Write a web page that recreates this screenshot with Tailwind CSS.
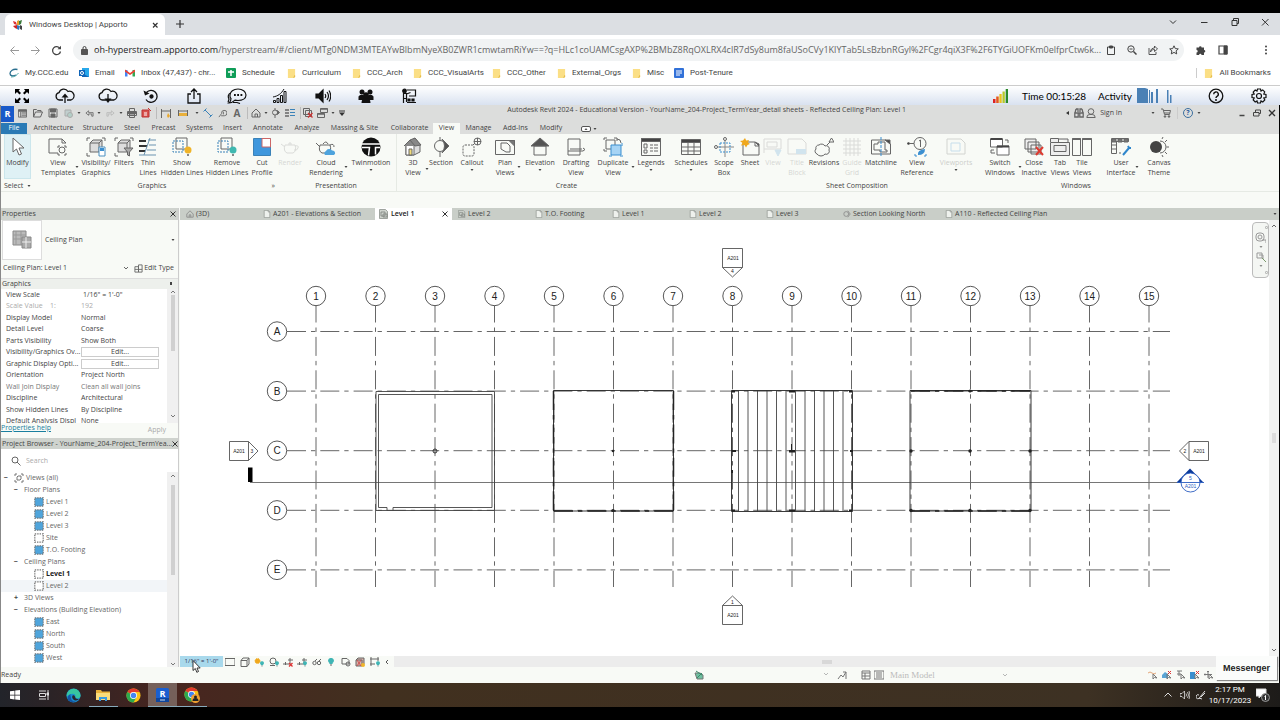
<!DOCTYPE html>
<html lang="en">
  <head>
    <meta charset="UTF-8" />
    <meta name="viewport" content="width=device-width, initial-scale=1.0" />
    <title>Windows Desktop | Apporto</title>
    <script src="https://cdn.jsdelivr.net/npm/@tailwindcss/browser@4"></script>
  </head>
  <body class="bg-black text-[#444] font-['Open_Sans','Noto_Sans',sans-serif] text-[7px] leading-[10px] overflow-hidden">
    <!-- Shared icons -->
    <svg class="hidden">
      <symbol id="folder" viewBox="0 0 10 10"><path d="M1 0h8v8l-1 2H1z" fill="#fbdf86"/><path d="M8 7h1v1L8 10H7z" fill="#e5bd4c"/></symbol>
      <symbol id="sheet" viewBox="0 0 10 10"><path d="M1.500.5h5l2 2v7h-7z" fill="#eef1ed" stroke="#8b908b" stroke-width=".8"/><path d="M6.500.5v2h2" fill="none" stroke="#8b908b" stroke-width=".8"/></symbol>
      <symbol id="plan" viewBox="0 0 10 10"><path d="M.5 9.500v-9h6l2 2v7z" fill="#ced3cd" stroke="#8b908b" stroke-width=".8"/><path d="M2 3h4v4H2zM4 5h4v3H4z" fill="none" stroke="#7c817c" stroke-width=".8"/></symbol>
      <symbol id="view-on" viewBox="0 0 10 10"><rect x=".8" y=".8" width="8.400" height="8.400" fill="#4fa5dc" stroke="#777" stroke-width="1.200" stroke-dasharray="1.400 1"/></symbol>
      <symbol id="view-off" viewBox="0 0 10 10"><rect x=".8" y=".8" width="8.400" height="8.400" fill="#fff" stroke="#777" stroke-width="1.300" stroke-dasharray="1.400 1"/></symbol>
      <symbol id="caret" viewBox="0 0 4 4"><path d="M.5 1h3L2 3z" fill="#444" stroke="none"/></symbol>
      <symbol id="bulb" viewBox="0 0 6 8"><path d="M3 0a2.700 2.700 0 0 1 1.600 5v1H1.400V5A2.700 2.700 0 0 1 3 0z" fill="#3fb5b5" stroke="none"/><path d="M2 7h2" stroke="#666"/></symbol>
      <symbol id="chrome" viewBox="0 0 16 16">
        <circle cx="8" cy="8" r="7.500" fill="#fbc116"/>
        <path d="M8 8 1.500 4.200A7.500 7.500 0 0 1 14.500 4.300H8z" fill="#e33b2e"/>
        <path d="M1.500 4.200A7.500 7.500 0 0 0 8 15.500L11 10 8 8z" fill="#2da94f"/>
        <circle cx="8" cy="8" r="3.700" fill="#fff"/><circle cx="8" cy="8" r="2.900" fill="#4285f4"/>
      </symbol>
    </svg>

    <div class="h-screen flex flex-col py-[13px]">
      <!-- Browser tabs -->
      <div class="h-[22px] shrink-0 bg-[#dcdfe3] flex items-stretch pl-[5px] font-[Roboto,sans-serif] text-[8px]">
        <div class="w-40 bg-white rounded-t-md mt-px pl-2 pr-1.5 flex items-center">
          <svg class="size-[10px]" viewBox="0 0 10 10"><path d="M0 1l3 1 1 3-3-1z" fill="#d33"/><path d="M4 1l2-1v5H4z" fill="#e9a02c"/><path d="M6 1l3-1-1 4-2 1z" fill="#3a7a3a"/><path d="M0 6l4-1v4l-2-1z" fill="#c22"/><path d="M4 5l3 1-1 4-2-1z" fill="#37b"/><path d="M7 5l2 1v4L7 9z" fill="#444"/></svg>
          <span class="ml-1.5 flex-1 whitespace-nowrap">Windows Desktop | Apporto</span>
          <button aria-label="Close tab"><svg class="size-2 stroke-[#333]" viewBox="0 0 8 8"><path d="M2 2l4.500 4.500M6.500 2L2 6.500" stroke-width="1.200"/></svg></button>
        </div>
        <button class="ml-2.5" aria-label="New tab"><svg class="size-[10px] stroke-[#333]" viewBox="0 0 10 10"><path d="M5 1v8M1 5h8" stroke-width="1.200"/></svg></button>
        <div class="ml-auto flex items-center pb-1 stroke-[#333] fill-none">
          <button class="w-[31px] flex justify-center" aria-label="Search tabs"><svg class="size-2" viewBox="0 0 8 8"><path d="M1 2.500l3 3 3-3"/></svg></button>
          <button class="w-[31px] flex justify-center" aria-label="Minimize"><svg class="size-2" viewBox="0 0 8 8"><path d="M1 4.500h6.500"/></svg></button>
          <button class="w-[31px] flex justify-center" aria-label="Restore"><svg class="size-2" viewBox="0 0 8 8"><path d="M1 2.500h5v5H1zM2.500 2V.5h5v5H6"/></svg></button>
          <button class="w-[30px] flex justify-center" aria-label="Close"><svg class="size-2" viewBox="0 0 8 8"><path d="M1 1l6.500 6.500M7.500 1L1 7.500"/></svg></button>
        </div>
      </div>

      <!-- Address bar -->
      <div class="h-[30px] shrink-0 bg-white flex items-center pl-[9px] pr-[9px] stroke-[#444] fill-none">
        <button class="w-[21px]" aria-label="Back"><svg class="size-[11px] stroke-[#999]" viewBox="0 0 11 11"><path d="M10 5.500H2M5.500 1.500l-4 4 4 4"/></svg></button>
        <button class="w-[21px]" aria-label="Forward"><svg class="size-[11px] stroke-[#999]" viewBox="0 0 11 11"><path d="M1 5.500h8M5.500 1.500l4 4-4 4"/></svg></button>
        <button class="w-[22px]" aria-label="Reload"><svg class="size-[11px]" viewBox="0 0 11 11"><path d="M9 3.500A4 4 0 1 0 9.500 6.500" stroke-width="1.300"/><path d="M10 .8v3.500H6.500z" fill="#444" stroke="none"/></svg></button>
        <div class="flex-1 min-w-0 h-[22px] rounded-full bg-[#f1f3f4] flex items-center pl-2">
          <svg class="w-[7px] h-[9px] shrink-0" viewBox="0 0 7 9"><path d="M.5 3.500h6v5h-6z" fill="#555" stroke="#555"/><path d="M2 3.500V2a1.500 1.500 0 0 1 3 0v1.500"/></svg>
          <p class="ml-1.5 flex-1 min-w-0 whitespace-nowrap text-[9px] leading-[14px] text-[#666]"><span class="text-[#222]">oh-hyperstream.apporto.com</span>/hyperstream/#/client/MTg0NDM3MTEAYwBlbmNyeXB0ZWR1cmwtamRiYw==?q=HLc1coUAMCsgAXP%2BMbZ8RqOXLRX4clR7dSy8um8faUSoCVy1KlYTab5LsBzbnRGyl%2FCgr4qiX3F%2F6TYGiUOFKm0elfprCtw6k...</p>
          <div class="grid grid-cols-4 w-[84px] shrink-0 justify-items-center">
            <button aria-label="Clipboard"><svg class="size-[10px]" viewBox="0 0 10 10"><path d="M1.500 2h7v7.500h-7z"/><path d="M3.500 1h3v2h-3z" fill="#444"/></svg></button>
            <button aria-label="Zoom"><svg class="size-[10px]" viewBox="0 0 10 10"><circle cx="4" cy="4" r="3.200"/><path d="M6.500 6.500L9.500 9.500" stroke-width="1.500"/><path d="M2.500 4h3"/></svg></button>
            <button aria-label="Share"><svg class="size-[10px]" viewBox="0 0 10 10"><path d="M1 3v6.500h7V7M2.500 7c0-3 2-4 4-4V1l3 3-3 2.500v-2c-2 0-3 .5-4 2.500z" stroke-width=".9"/></svg></button>
            <button aria-label="Bookmark"><svg class="size-[10px]" viewBox="0 0 10 10"><path d="M5 .8l1.300 2.800 3 .3-2.200 2 .6 3L5 7.400 2.300 8.900l.6-3-2.200-2 3-.3z"/></svg></button>
          </div>
        </div>
        <button class="ml-3" aria-label="Extensions"><svg class="size-[10px]" viewBox="0 0 10 10"><path d="M.5 2.500H3a1.300 1.300 0 1 1 2.600 0H8V5a1.300 1.300 0 1 1 0 2.600V10H5.500a1.200 1.200 0 1 0-2.400 0H.5V7.500a1.200 1.200 0 1 0 0-2.400z" fill="#444" stroke="none"/></svg></button>
        <button class="ml-3" aria-label="Side panel"><svg class="size-[10px]" viewBox="0 0 10 10"><path d="M1 1h8v8H1z" stroke-width="1.200"/><path d="M6 1h3v8H6z" fill="#444"/></svg></button>
        <button class="ml-[33px]" aria-label="Menu"><svg class="size-[10px] fill-[#444] stroke-none" viewBox="0 0 10 10"><circle cx="5" cy="1.500" r="1"/><circle cx="5" cy="5" r="1"/><circle cx="5" cy="8.500" r="1"/></svg></button>
      </div>

      <!-- Bookmarks -->
      <nav class="h-5 shrink-0 bg-white flex items-center pb-1 pl-[9px] pr-[9px] text-[8px] font-[Roboto,sans-serif] whitespace-nowrap [&>a]:flex [&>a]:items-center [&>a]:gap-[6px]">
        <a href="#" class="w-[70px]"><svg class="size-[10px]" viewBox="0 0 10 10"><path d="M8.500 1.500C4 .5 1 3 1 5.500s3 3 6 1.500" fill="none" stroke="#2a6f8f" stroke-width="1.300"/><path d="M2 9c4 0 6-2 7.500-4" fill="none" stroke="#5aa"/></svg>My.CCC.edu</a>
        <a href="#" class="w-[46px]"><svg class="size-[10px]" viewBox="0 0 10 10"><path d="M3 0h7v9H3z" fill="#28a8ea"/><path d="M3 5l7 4H3z" fill="#1466b8"/><path d="M0 2h6v6H0z" fill="#0f64b8"/><circle cx="3" cy="5" r="1.500" fill="none" stroke="#fff"/></svg>Email</a>
        <a href="#" class="w-[101px]"><svg class="size-[10px]" viewBox="0 0 10 10"><path d="M0 2h2.500v6.500H0z" fill="#4285f4"/><path d="M7.500 2H10v6.500H7.500z" fill="#34a853"/><path d="M0 1.500L5 5l5-3.500v2.200L5 7 0 3.700z" fill="#ea4335"/></svg>Inbox (47,437) - chr...</a>
        <a href="#" class="w-[61px]"><svg class="size-[10px]" viewBox="0 0 10 10"><rect width="10" height="10" rx="1" fill="#0f9d58"/><path d="M2 4h6M5 2v6" stroke="#fff" stroke-width="1.500"/></svg>Schedule</a>
        <a href="#" class="w-[65px]"><svg class="size-[9px]"><use href="#folder"/></svg>Curriculum</a>
        <a href="#" class="w-[61px]"><svg class="size-[9px]"><use href="#folder"/></svg>CCC_Arch</a>
        <a href="#" class="w-[79px]"><svg class="size-[9px]"><use href="#folder"/></svg>CCC_VisualArts</a>
        <a href="#" class="w-[65px]"><svg class="size-[9px]"><use href="#folder"/></svg>CCC_Other</a>
        <a href="#" class="w-[75px]"><svg class="size-[9px]"><use href="#folder"/></svg>External_Orgs</a>
        <a href="#" class="w-[42px]"><svg class="size-[9px]"><use href="#folder"/></svg>Misc</a>
        <a href="#"><svg class="size-[10px]" viewBox="0 0 10 10"><rect width="10" height="10" rx="1" fill="#3271d8"/><path d="M2 3h6M2 5h6M2 7h4" stroke="#fff"/></svg>Post-Tenure</a>
        <a href="#" class="ml-auto border-l border-[#ccc] pl-[7px]"><svg class="size-[9px]"><use href="#folder"/></svg>All Bookmarks</a>
      </nav>

      <!-- Remote session toolbar -->
      <div class="h-5 shrink-0 border-t border-[#ccc] bg-linear-to-b from-white to-[#d9e2f0] flex items-center text-[10px] font-[Lato,sans-serif] text-black [&>button]:flex [&>button]:justify-center">
        <button class="w-[43px]" aria-label="Full screen"><svg class="size-4" viewBox="0 0 16 16"><path d="M1 1h5L4.700 2.700 7 5 5.500 6.500 3 4 1 6zM15 1h-5l1.300 1.700L9 5l1.500 1.500L13 4l2 2zM1 15h5l-1.300-1.700L7 11 5.500 9.500 3 12l-2-2zM15 15h-5l1.300-1.700L9 11l1.500-1.500L13 12l2-2z"/></svg></button>
        <button class="w-[43px]" aria-label="Upload"><svg class="w-5 h-4" viewBox="0 0 20 16" fill="none" stroke="#111" stroke-width="1.300"><path d="M8 12H4.500a3.700 3.700 0 0 1-.5-7.300A5 5 0 0 1 13 3.500 4.300 4.300 0 0 1 16 12h-4"/><path d="M10 15V7"/><path d="M6.500 9.500L10 5.500l3.500 4z" fill="#111" stroke="none"/></svg></button>
        <button class="w-[43px]" aria-label="Download"><svg class="w-5 h-4" viewBox="0 0 20 16" fill="none" stroke="#111" stroke-width="1.300"><path d="M8 12H4.500a3.700 3.700 0 0 1-.5-7.300A5 5 0 0 1 13 3.500 4.300 4.300 0 0 1 16 12h-4"/><path d="M10 6v7"/><path d="M6.500 10.500L10 15l3.500-4.500z" fill="#111" stroke="none"/></svg></button>
        <button class="w-[43px]" aria-label="Refresh"><svg class="size-4" viewBox="0 0 16 16" fill="none" stroke="#111" stroke-width="1.300"><path d="M3.500 4.500a6 6 0 1 1-.5 7"/><path d="M.5 2.500L2 7.500l4.500-2z" fill="#111" stroke="none"/><circle cx="8.500" cy="8.500" r="1.500" fill="#111"/></svg></button>
        <button class="w-[43px]" aria-label="Share"><svg class="size-4" viewBox="0 0 16 16" fill="none" stroke="#111" stroke-width="1.300"><path d="M5 6H2v9h12V6h-3M8 11V1.500M5 4l3-3 3 3"/></svg></button>
        <button class="w-[43px]" aria-label="Chat"><svg class="w-5 h-4" viewBox="0 0 20 16" fill="none" stroke="#111" stroke-width="1.200"><path d="M11 1C15.500 1 19 3.500 19 7s-3.500 5.500-8 5.500c-1 0-2-.1-3-.4C6 14 4 15 2 15c1.500-1 2-2.500 2-4.500C2.500 9.500 3 8.300 3 7c0-3.500 3.500-6 8-6z"/><path d="M3.500 5C1 6 .8 9 2 11L1 14.500M6 14.500h4l3 1"/><path d="M7 7h1.800M10.200 7H12M13.500 7h1.800" stroke-width="2"/></svg></button>
        <button class="w-[43px]" aria-label="Statistics"><svg class="size-4" viewBox="0 0 16 16" fill="none" stroke="#111"><path d="M1.500 12.500h2v2h-2zM5 10.500h2v4H5zM8.500 7.500h2v7h-2zM12 3.500h2v11h-2zM1 9c5-1 8-3 11-8"/></svg></button>
        <button class="w-[43px]" aria-label="Sound"><svg class="size-4" viewBox="0 0 16 16" fill="none" stroke="#111" stroke-width="1.200"><path d="M1 6h3l4-4v12l-4-4H1z" fill="#111"/><path d="M10 6q1.500 2 0 4M12 4q3 4 0 8M14 2.500q3.500 5.500 0 11"/></svg></button>
        <button class="w-[43px]" aria-label="People"><svg class="size-4" viewBox="0 0 16 16" fill="#111"><circle cx="4" cy="4" r="2.500"/><circle cx="12" cy="4" r="2.500"/><path d="M.5 8.500Q2 6 5 7l3 1 3-1q3-1 4.500 1.500V12H.5z"/><circle cx="8" cy="7" r="2.800"/><path d="M3.500 15q0-5 4.500-5t4.500 5z"/></svg></button>
        <button class="w-[43px]" aria-label="Classroom"><svg class="size-4" viewBox="0 0 16 16" fill="none" stroke="#111" stroke-width="1.200"><circle cx="3.500" cy="3" r="1.800" fill="#111"/><path d="M2.500 5.500h3v5h-3zM6 2h8.500v6H8M5.500 6l4-1.500M2.500 11v4M5.500 11v3" /><path d="M6 14.500h9M7 11h2v2H7zM11 11h2v2h-2z" fill="#111"/></svg></button>
        <div class="flex-1"></div>
        <svg class="w-[15px] h-[14px]" viewBox="0 0 15 14"><path d="M0 10h2.500v4H0z" fill="#d22"/><path d="M3.200 7.500h2.500V14H3.200z" fill="#e55a1c"/><path d="M6.400 5h2.300v9H6.400z" fill="#e8c21c"/><path d="M9.500 2.500h2.300V14H9.500z" fill="#b5c92a"/><path d="M12.700 0H15v14h-2.300z" fill="#2a8a2a"/></svg>
        <span class="ml-[14px] w-[76px] whitespace-nowrap">Time 00:15:28</span>
        <span class="w-[39px]">Activity</span>
        <svg class="w-[35px] h-[15px] shrink-0" viewBox="0 0 35 15" fill="#4a80b5"><path d="M0 0h8l3 1v14H0zM12 2h1v13h-1zM14 4h2v11h-2zM19 1h2v14h-2zM30 2h1.500v13H30zM33 7h1.500v8H33z"/></svg>
        <button class="ml-[22px] w-[43px]" aria-label="Help"><svg class="size-4" viewBox="0 0 16 16"><circle cx="8" cy="8" r="6.800" fill="none" stroke="#111" stroke-width="1.300"/><path d="M5.700 6.300a2.300 2.300 0 1 1 3.300 2q-1 .5-1 1.700" fill="none" stroke="#111" stroke-width="1.400"/><circle cx="8" cy="12" r=".9"/></svg></button>
        <button class="w-[43px]" aria-label="Settings"><svg class="size-4" viewBox="0 0 16 16" fill="none" stroke="#111" stroke-width="1.200"><path d="M6.500 1h3l.5 2 1.700-1.100 2 2L12.800 6l2.200.5v3l-2.200.5 1 2-2 2-1.800-1-.5 2h-3L6 13l-1.800 1-2-2 1-2L1 9.500v-3L3.200 6l-1-2 2-2L6 3z"/><circle cx="8" cy="8" r="2.500"/></svg></button>
      </div>

      <!-- Revit window -->
      <div class="flex-1 min-h-0 flex flex-col bg-[#f8faf6] border-l border-[#888] border-r border-r-black relative">
        <!-- Quick access + title -->
        <header class="h-[18px] shrink-0 bg-[#dcdddc] flex items-center fill-none stroke-[#666] pb-[2px] [&_button]:flex [&_button]:justify-center [&_button]:items-center [&_button]:h-4 [&_button]:shrink-0">
          <button class="w-[13px] mr-px mt-px bg-[#1859c9] text-white font-bold text-[9px]">R</button>
          <button class="w-[14px]" aria-label="Home"><svg class="size-[9px] shrink-0" viewBox="0 0 10 10"><path d="M.5 1h9v8h-9zM4 3.500h5M4 5.500h5M4 7.500h5M3 3v6"/><path d="M.5 1h9v1.500h-9z" fill="#666"/></svg></button>
          <button class="w-[18px]" aria-label="Open"><svg class="size-[10px]" viewBox="0 0 10 10"><path d="M.5 9V1.500h3l1 1H8V4M.5 9l2-5h7L7.500 9z"/></svg></button>
          <button class="w-3" aria-label="Save"><svg class="size-[10px]" viewBox="0 0 10 10"><path d="M1 1h8v8H1z"/><path d="M2.500 1h5v3h-5zM3 6h4v3H3z" fill="#666"/></svg></button>
          <button class="w-[18px] opacity-40" aria-label="Sync"><svg class="size-[10px]" viewBox="0 0 10 10"><path d="M2 2h6v6H2z" fill="#9bb" /><circle cx="7" cy="7" r="2.500" fill="#7ba"/></svg></button>
          <svg class="w-1 h-1 shrink-0"><use href="#caret"/></svg>
          <button class="w-4" aria-label="Undo"><svg class="size-[9px]" viewBox="0 0 10 10"><path d="M4 2L1 4.500 4 7V5.500h3.500V8H9V4H4z" stroke-width=".9"/></svg></button>
          <svg class="w-1 h-1 shrink-0"><use href="#caret"/></svg>
          <button class="w-[18px] opacity-30" aria-label="Redo"><svg class="size-[9px]" viewBox="0 0 10 10"><path d="M6 2l3 2.500L6 7V5.500H2.500V8H1V4h5z" stroke-width=".9"/></svg></button>
          <svg class="w-1 h-1 shrink-0"><use href="#caret"/></svg>
          <button class="w-[18px]" aria-label="Print"><svg class="size-[10px]" viewBox="0 0 10 10"><path d="M2.500 3V.5h5V3M.5 3.500h9v4h-9zM2.500 6h5v3.500h-5z"/><path d="M1 4h8v1.500H1z" fill="#666"/></svg></button>
          <button class="w-[10px]" aria-label="Close hidden"><svg class="size-[10px] shrink-0" viewBox="0 0 10 10"><path d="M1 2h7v7H1z" fill="#d9534f" stroke="#b33"/><path d="M3 5h3M3 7h3" stroke="#fff"/><path d="M7 0l3 3" stroke="#c33"/></svg></button>
          <i class="w-px h-3 ml-[5px] mr-1 bg-[#bbb]"></i>
          <button class="w-[10px]" aria-label="Measure"><svg class="size-[11px] shrink-0" viewBox="0 0 11 11"><path d="M.5 10V1M9.500 10V1M.5 3h9"/><path d="M7 5l2 3-2 2-1-2z" fill="#e9a82c" stroke="none"/></svg></button>
          <button class="w-6" aria-label="Dimension"><svg class="size-[10px]" viewBox="0 0 10 10"><path d="M0 5h10v3H0z" fill="#e9b03c" stroke="none"/><path d="M.5 2v6M9.500 2v6M.5 3h9"/></svg></button>
          <svg class="w-1 h-1 shrink-0"><use href="#caret"/></svg>
          <button class="w-[18px]" aria-label="Aligned"><svg class="size-[10px]" viewBox="0 0 10 10"><path d="M2 2l6 6M.5 3.500l3-3M6.500 9.500l3-3" stroke="#3b82b8"/></svg></button>
          <button class="w-[10px]" aria-label="Tag"><svg class="size-[9px] shrink-0" viewBox="0 0 10 10"><path d="M1 9l3-4M4 5a3 3 0 1 1 3 2.500H3.500"/><path d="M6 3v3"/></svg></button>
          <button class="w-5 text-[10px] font-bold text-[#666]">A</button>
          <i class="w-px h-3 bg-[#bbb]"></i>
          <button class="w-[16px]" aria-label="3D"><svg class="size-[10px]" viewBox="0 0 10 10"><path d="M1 5l4-4 4 4v4H1z"/><path d="M4 9V6h2.500v3M1 5l4-4 4 4"/></svg></button>
          <svg class="w-1 h-1 shrink-0"><use href="#caret"/></svg>
          <button class="w-[14px]" aria-label="Section"><svg class="size-[10px]" viewBox="0 0 10 10"><circle cx="5" cy="4.500" r="2.500"/><path d="M5 0v2M5 7v3M7.500 2.500L9.500 4.500l-2 2z" fill="#666"/></svg></button>
          <button class="w-4" aria-label="Thin lines"><svg class="size-[10px]" viewBox="0 0 10 10"><path d="M0 2h4M0 5h4M0 8h4" stroke-width="1.600"/><path d="M5 1.500h5M5 4.500h5M5 7.500h5" stroke="#3b82b8"/></svg></button>
          <i class="w-px h-3 mx-[2px] bg-[#bbb]"></i>
          <button class="w-[10px]" aria-label="Close views"><svg class="size-[10px] shrink-0" viewBox="0 0 10 10"><path d="M.5.5h6v6h-6zM2.500 2.500h6v6h-6z"/><path d="M5 5l4.500 4.500M9.500 5L5 9.500" stroke="#c33" stroke-width="1.300"/></svg></button>
          <button class="w-[18px]" aria-label="Switch"><svg class="size-[11px]" viewBox="0 0 11 11"><path d="M3.500.5h7v4h-7zM.5 5.500h7v4h-7z"/><path d="M3.500 1h7M.5 6h7" stroke-width="1.500"/></svg></button>
          <svg class="w-1 h-1 shrink-0"><use href="#caret"/></svg>
          <button class="w-[14px]" aria-label="Customize"><svg class="size-[6px]" viewBox="0 0 6 6"><path d="M0 1h6" stroke="#333"/><path d="M0 2.500h6L3 6z" fill="#333" stroke="none"/></svg></button>
          <h1 class="flex-1 text-center whitespace-nowrap text-[#444] self-start">Autodesk Revit 2024 - Educational Version - YourName_204-Project_TermYear_detail sheets - Reflected Ceiling Plan: Level 1</h1>
          <button class="w-[8px]" aria-label="Expand"><svg class="size-1" viewBox="0 0 4 4"><path d="M3 0v4L0 2z" fill="#333" stroke="none"/></svg></button>
          <button class="w-[14px]" aria-label="Find"><svg class="size-[10px]" viewBox="0 0 10 10"><path d="M2 1h2v3M8 1H6v3M.8 5h3.400v4H.8zM5.800 5h3.400v4H5.800zM1 5l1-4M9 5L8 1M4 5h2" stroke-width="1.300"/></svg></button>
          <button class="gap-1" aria-label="Sign in"><svg class="size-[10px]" viewBox="0 0 10 10"><circle cx="5" cy="3.500" r="2.800"/><path d="M.8 9.500q0-3 3-3h2.400q3 0 3 3z"/></svg>Sign In</button>
          <svg class="w-1 h-1 ml-[29px] mr-1 shrink-0"><use href="#caret"/></svg>
          <button class="w-[14px]" aria-label="Cart"><svg class="size-[10px]" viewBox="0 0 10 10"><path d="M0 1h2l1.500 5.500h5L9.500 2.500H2.500M3 5h6"/><circle cx="4" cy="8.500" r=".8" fill="#666"/><circle cx="8" cy="8.500" r=".8" fill="#666"/></svg></button>
          <i class="w-px h-3 ml-1 mr-[5px] bg-[#ccc]"></i>
          <button class="w-[10px]"><span class="size-[10px] shrink-0 rounded-full border border-[#3b6f9f] text-[#2a5f9f] font-bold leading-[8px]">?</span></button>
          <svg class="w-1 h-1 ml-1 mr-[34px] shrink-0"><use href="#caret"/></svg>
          <button class="w-[14px]" aria-label="Minimize"><svg class="w-2 h-2" viewBox="0 0 8 8"><path d="M1.500 6.500h5" stroke="#444" stroke-width="1.500"/></svg></button>
          <button class="w-4" aria-label="Restore"><svg class="size-2" viewBox="0 0 8 8"><path d="M2.500 3V1h5v3.500H6M.5 3.500H6v3.500H.5z" stroke="#444"/></svg></button>
          <button class="w-[14px]" aria-label="Close"><svg class="size-2" viewBox="0 0 8 8"><path d="M1 1l6 6M7 1L1 7" stroke="#333" stroke-width="1.300"/></svg></button>
        </header>

        <!-- Ribbon tabs -->
        <nav class="h-[11px] shrink-0 bg-[#dcdddc] flex items-stretch whitespace-nowrap leading-[10px] text-center">
          <a href="#" class="w-[26px] bg-[#2a7ab5] text-white">File</a>
          <a href="#" class="w-[53px]">Architecture</a>
          <a href="#" class="w-[36px]">Structure</a>
          <a href="#" class="w-8">Steel</a>
          <a href="#" class="w-[31px]">Precast</a>
          <a href="#" class="w-[41px]">Systems</a>
          <a href="#" class="w-[25px]">Insert</a>
          <a href="#" class="w-[46px]">Annotate</a>
          <a href="#" class="w-8">Analyze</a>
          <a href="#" class="w-[63px]">Massing &amp; Site</a>
          <a href="#" class="w-[47px]">Collaborate</a>
          <a href="#" class="w-[27px] bg-[#f8faf6]">View</a>
          <a href="#" class="w-[37px]">Manage</a>
          <a href="#" class="w-[37px]">Add-Ins</a>
          <a href="#" class="w-[34px]">Modify</a>
          <button class="ml-[13px] flex items-center gap-[2px]" aria-label="Ribbon display"><svg class="w-[10px] h-[6px]" viewBox="0 0 10 6"><rect x=".5" y=".5" width="9" height="5" rx="1.500" fill="#fff" stroke="#555"/><path d="M3.500 4h3L5 2z" fill="#555"/></svg><svg class="size-1"><use href="#caret"/></svg></button>
        </nav>

        <!-- Ribbon -->
        <div class="h-[58px] shrink-0 border-b border-[#e6eae4] flex fill-none stroke-[#666] whitespace-nowrap [&_button]:relative [&_button]:flex [&_button]:flex-col [&_button]:items-center [&_button]:h-[45px] [&_button]:pt-[3px] [&_button]:leading-[10px] [&_button]:shrink-0 [&_button>svg:first-child]:mb-px [&_button>svg]:shrink-0">
          <section class="w-[31px] flex flex-col">
            <div class="flex"><button class="w-[27px] ml-[3px] bg-[#dff1f5] outline outline-[#cbe6ec] -outline-offset-1">
              <svg class="size-5" viewBox="0 0 20 20"><path d="M5 1v14l3.500-3 2.500 6 2.500-1-2.500-6h5z" fill="#fff"/></svg>Modify</button></div>
            <h2 class="mt-[2px] pl-[3px] flex items-center gap-1">Select <svg class="size-1"><use href="#caret"/></svg></h2>
          </section>
          <section class="w-[240px] flex flex-col">
            <div class="flex pl-1.5">
              <button class="w-10"><svg class="size-5" viewBox="0 0 20 20"><path d="M1 16V2h13l4 4M1 16h9M14 2v4h4"/><circle cx="14" cy="13" r="3"/><path d="M10 11V9h2M18 11V9h-2M10 16v2h2M18 16v2h-2"/></svg>View<br />Templates<svg class="size-1 absolute -right-px top-[31px]"><use href="#caret"/></svg></button>
              <button class="w-9"><svg class="size-5" viewBox="0 0 20 20"><path d="M1 4V1h3M16 1h3v3M1 16v3h3" /><path d="M4 6l3-3h9v9l-3 3H4zM4 6h9v9M13 6l3-3" fill="#ddd"/><path d="M13 10h6v9h-6z" fill="#fff" stroke="#4a90c0"/><path d="M14 11h4v3h-4z" fill="#3b8fd0" stroke="none"/></svg>Visibility/<br />Graphics</button>
              <button class="w-5"><svg class="size-5" viewBox="0 0 20 20"><path d="M1 4V1h3M16 1h3v3M1 16v3h3"/><path d="M4 6l3-3h9v9l-3 3H4zM4 6h9v9M13 6l3-3" fill="#ddd"/><path d="M10 11h9l-3.500 4v4l-2 -1v-3z" fill="#aaa"/></svg>Filters</button>
              <button class="w-7"><svg class="size-5" viewBox="0 0 20 20"><path d="M1 4h7M1 9h8M1 14h6" stroke="#333" stroke-width="2"/><path d="M10 3h8M11 8h7M9 13h9M1 18h17M12 1L6 18" stroke="#6a93b0"/></svg>Thin<br />Lines</button>
              <button class="w-10"><svg class="size-5" viewBox="0 0 20 20"><path d="M4 1h11v11H4z"/><path d="M1 4h10v11H1z" stroke="#3b82b8" stroke-dasharray="2 1"/><circle cx="16" cy="13" r="3.500" fill="#f0b429" stroke="none"/><path d="M15 17h2v2h-2z" fill="#888" stroke="none"/></svg>Show<br />Hidden Lines</button>
              <button class="w-[50px]"><svg class="size-5" viewBox="0 0 20 20"><path d="M4 1h11v11H4z"/><path d="M1 4h10v11H1z" stroke="#3b82b8" stroke-dasharray="2 1"/><circle cx="16" cy="13" r="3.500" fill="#3fb8b0" stroke="none"/><path d="M15 17h2v2h-2z" fill="#888" stroke="none"/></svg>Remove<br />Hidden Lines</button>
              <button class="w-5"><svg class="size-5" viewBox="0 0 20 20"><path d="M1.500 1.500h17v17h-17z" fill="#3f97dd" stroke="#3b82b8"/><path d="M10 1.500h8.500V10H10z" fill="#fff" stroke="#c66"/></svg>Cut<br />Profile</button>
            </div>
            <h2 class="mt-[2px] text-center relative">Graphics<span class="absolute right-[-3px]">»</span></h2>
          </section>
          <section class="w-[124px] flex flex-col pl-1">
            <div class="flex">
              <button class="w-7 opacity-20" disabled><svg class="size-5" viewBox="0 0 20 20"><path d="M5 8h10q2 6-2 8H7Q3 14 5 8zM5 10L1 7M15 9q4-1 3 2t-4 2M8 7h4M10 5v2"/></svg>Render</button>
              <button class="w-11"><svg class="size-5" viewBox="0 0 20 20"><path d="M4 8h10q2 6-2 8H6Q2 14 4 8zM4 10L0 6M14 8q4-2 4 2M7 7q3-4 5 0"/><path d="M9 18a2.500 2.500 0 0 1 1-4 3.500 3.500 0 0 1 6-.5A2.500 2.500 0 0 1 18 18z" fill="#4ea3dd" stroke="none"/></svg>Cloud<br />Rendering<svg class="size-1 absolute right-0 top-[31px]"><use href="#caret"/></svg></button>
              <button class="w-[46px]"><svg class="size-5" viewBox="0 0 20 20"><circle cx="10" cy="10" r="9.500" fill="#111" stroke="none"/><path d="M1 7h18M1 10.500h7.500l-1 8M19 10.500h-4.500v7" stroke="#fff" stroke-width="1.500"/></svg>Twinmotion<svg class="size-1"><use href="#caret"/></svg></button>
            </div>
            <h2 class="mt-[2px] text-center">Presentation</h2>
          </section>
          <section class="w-[340px] flex flex-col border-l border-[#e6eae4]">
            <div class="flex">
              <button class="w-8"><svg class="size-5" viewBox="0 0 20 20"><path d="M3 9v9h8l6-3V8l-5-7z" fill="#ddd"/><path d="M3 9v9h8V9L7 5z" fill="#fff"/><path d="M1 9l6-6 5 6M7 3l5-2 6 7-6 1" fill="#888"/><path d="M6 12h3v6H6z" fill="#f3dd7a"/></svg>3D<br />View<svg class="size-1 absolute right-0 top-[33px]"><use href="#caret"/></svg></button>
              <button class="w-6"><svg class="size-5" viewBox="0 0 20 20"><circle cx="9" cy="9" r="5.500"/><path d="M9 0v3M9 15v5"/><path d="M11 2l7 7-7 7q5-7 0-14z" fill="#555"/></svg>Section</button>
              <button class="w-[38px]"><svg class="size-5" viewBox="0 0 20 20"><rect x="1" y="8" width="11" height="11" rx="2" stroke-dasharray="2 1"/><circle cx="15.500" cy="4.500" r="3.500"/><path d="M12 4.500h7M15.500 1v7M11 8l2-2"/></svg>Callout<svg class="size-1"><use href="#caret"/></svg></button>
              <button class="w-7"><svg class="size-5" viewBox="0 0 20 20"><path d="M.5 3.500h19v14H.5zM6 6h6l3 3v6h-4L6 12z"/><path d="M14 3.500h5.500V9z" fill="#777"/></svg>Plan<br />Views<svg class="size-1 absolute -right-0.5 top-[31px]"><use href="#caret"/></svg></button>
              <button class="w-[42px]"><svg class="size-5" viewBox="0 0 20 20"><path d="M4 9h12v9H4z"/><path d="M1 9l9-8 9 8z" fill="#555"/></svg>Elevation<svg class="size-1"><use href="#caret"/></svg></button>
              <button class="w-[30px]"><svg class="size-5" viewBox="0 0 20 20"><path d="M2 2h12v16H2zM4 12h12M2 14h15l2-1.500L17 11"/></svg>Drafting<br />View</button>
              <button class="w-11"><svg class="size-5" viewBox="0 0 20 20"><path d="M3 3h9v9H3z"/><path d="M1 3V1h3M11 1h3v3M1 12v2h3M14 2q4 0 4 4"/><path d="M8 8h10v10H8z" fill="#a6d4f5" stroke="#3b8fd0"/><path d="M6 19h3M17 19h3M19 6v3" stroke="#3b8fd0"/></svg>Duplicate<br />View<svg class="size-1 absolute right-0 top-[31px]"><use href="#caret"/></svg></button>
              <button class="w-8"><svg class="size-5" viewBox="0 0 20 20"><path d="M.5 1.500h19v17H.500z"/><path d="M.5 1.500h19v3H.5z" fill="#444"/><path d="M3 7h3v4H3zM3 13h3v3H3zM9 8h3M13 8h4M9 11h3M13 11h4M9 14h3M13 14h4"/></svg>Legends<svg class="size-1"><use href="#caret"/></svg></button>
              <button class="w-12"><svg class="size-5" viewBox="0 0 20 20"><path d="M.5 3.500h19v14H.5zM7 6v12M13 6v12M.5 10h19M.5 14h19"/><path d="M.5 2.500h19v3H.5z" fill="#444"/></svg>Schedules<svg class="size-1"><use href="#caret"/></svg></button>
              <button class="w-[18px]"><svg class="size-5" viewBox="0 0 20 20"><circle cx="11" cy="2" r="1.500"/><circle cx="2" cy="10" r="1.500"/><path d="M3.500 10H20M11 4v16" stroke="#888"/><path d="M6 6h10v9H6z" stroke="#3b8fd0" stroke-dasharray="2 1"/></svg>Scope<br />Box</button>
            </div>
            <h2 class="mt-[2px] text-center">Create</h2>
          </section>
          <section class="w-[242px] flex flex-col">
            <div class="flex">
              <button class="w-7"><svg class="size-5" viewBox="0 0 20 20"><path d="M3 6v12h16V9l-4-4H8M15 5v4h4"/><path d="M15 5l4 4v-2z" fill="#444"/><path d="M5 1l1.200 2.500L9 3 8 5.500 10 7 7.500 8 6 10.500 4.500 8 1 8.500 2.500 6 0 4l3-.5z" fill="#f0a81c" stroke="none"/></svg>Sheet</button>
              <button class="w-[18px] opacity-20" disabled><svg class="size-5" viewBox="0 0 20 20"><path d="M1 2h17v10H1zM4 5h10v5H4zM1 16V12"/><path d="M12 13h6l-3 6z" fill="#3b8fd0" stroke="#3b8fd0"/></svg>View</button>
              <button class="w-[30px] opacity-20" disabled><svg class="size-5" viewBox="0 0 20 20"><path d="M1 2h14l4 4v11H1z"/><path d="M9 12h10v5H9z" fill="#3b8fd0" stroke="none"/></svg>Title<br />Block</button>
              <button class="w-6"><svg class="size-5" viewBox="0 0 20 20"><path d="M3 17a3 3 0 0 1-1-5 3 3 0 0 1 3-4 4 4 0 0 1 6 1 3 3 0 0 1 4 4 3 3 0 0 1-4 4 5 5 0 0 1-8 0zM13 8l3-3M15 5h5l-2.500-4z"/></svg>Revisions</button>
              <button class="w-8 opacity-20" disabled><svg class="size-5" viewBox="0 0 20 20"><path d="M1 4h18M1 8h18M1 12h18M1 16h18M4 1v18M8 1v18M12 1v18M16 1v18"/></svg>Guide<br />Grid</button>
              <button class="w-[26px]"><svg class="size-5" viewBox="0 0 20 20"><path d="M.5 3h14l5 4v10H.5zM3 7h4V5h7v8h2v2H9v-2H3z"/><path d="M14 3l5 4v-4z" fill="#444"/><path d="M10 0v20" stroke="#3b8fd0" stroke-dasharray="3 1"/></svg>Matchline</button>
              <button class="w-[46px]"><svg class="size-5" viewBox="0 0 20 20"><circle cx="13" cy="6.500" r="6"/><path d="M0 6.500h7M12 4l1.500-1v7"/><circle cx="1.500" cy="6.500" r="1" fill="#444"/><path d="M11 18q-1-5 7-6 0 6-7 6z" fill="#3b8fd0" stroke="none"/><path d="M8 17v2h2M19 17v2h-2" stroke="#3b8fd0"/></svg>View<br />Reference</button>
              <button class="w-8"><span class="flex flex-col items-center opacity-25"><svg class="size-5 mb-px" viewBox="0 0 20 20"><path d="M1 2h14l4 4v11H1z"/><path d="M5 6h9v8H5z" stroke="#3b8fd0"/></svg>Viewports</span><svg class="size-1"><use href="#caret"/></svg></button>
            </div>
            <h2 class="mt-[2px] text-center">Sheet Composition</h2>
          </section>
          <section class="w-[196px] flex flex-col">
            <div class="flex">
              <button class="w-11"><svg class="size-5" viewBox="0 0 20 20"><path d="M.5 2h12v8H.5zM7 9h12v9H7z" fill="#fff"/><path d="M.5 2h12M7 9.500h12" stroke="#444" stroke-width="2"/><path d="M15 3h3v3M4 13H1v3h4"/></svg>Switch<br />Windows<svg class="size-1 absolute right-0 top-[31px]"><use href="#caret"/></svg></button>
              <button class="w-6"><svg class="size-5" viewBox="0 0 20 20"><path d="M1 2h11v10H1zM4 5h11v10H4zM7 8h10v9H7z" fill="#eee"/><path d="M12 10l7 8M19 10l-7 8" stroke="#dd3a30" stroke-width="2"/></svg>Close<br />Inactive</button>
              <button class="w-7"><svg class="size-5" viewBox="0 0 20 20"><path d="M.5 5V1.500h8V5M8.500 2H18v3M.5 5.500h19v13H.5zM4 8.500h12v6H4z" fill="#eee"/></svg>Tab<br />Views</button>
              <button class="w-4"><svg class="size-5" viewBox="0 0 20 20"><path d="M.5 1.500h8v17h-8zM10.500 1.500h9v17h-9z"/><path d="M.5 2h8M10.500 2h9" stroke-width="2"/></svg>Tile<br />Views</button>
              <button class="w-[62px]"><svg class="size-5" viewBox="0 0 20 20"><path d="M.5 1.500h17v3H.5zM.5 4.500h5v12h-5zM.5 8h5M.5 12h5M8 16h2"/><path d="M1 2h4v3H1zM7 2h4v3H7zM13 2h4v3h-4z" fill="#777"/><path d="M12 18l6-7M17 9l1 2 2 0" stroke="#2f86cc" stroke-width="2"/></svg>User<br />Interface<svg class="size-1 absolute right-[13px] top-[31px]"><use href="#caret"/></svg></button>
              <button class="w-[14px]"><svg class="size-5" viewBox="0 0 20 20"><path d="M11 4a6 6 0 0 1 0 12" /><path d="M13 2l1-2M16 5l2-2M17.500 10H20M16 15l2 2M13 18l1 2"/><circle cx="7" cy="10" r="6" fill="#444" stroke="none"/></svg>Canvas<br />Theme</button>
            </div>
            <h2 class="mt-[2px] text-center">Windows</h2>
          </section>
        </div>

        <div class="h-4 shrink-0"></div>

        <!-- Panels and canvas -->
        <div class="flex-1 min-h-0 flex">
          <aside class="w-[178px] shrink-0 flex flex-col border-r border-[#ccc] mr-px">
            <!-- Properties -->
            <div class="h-3 shrink-0 bg-[#cfd3ce] flex items-center justify-between pl-px pr-[2px]"><span>Properties</span><button aria-label="Close properties"><svg class="size-[6px] stroke-[#333]" viewBox="0 0 6 6"><path d="M.5.5l5 5M5.500.5l-5 5"/></svg></button></div>
            <div class="h-10 shrink-0 flex items-center">
              <div class="w-10 h-10 ml-px border border-[#ddd] bg-white flex items-center justify-center"><svg class="size-5" viewBox="0 0 20 20"><path d="M1 1h13v14H1z" fill="#bbb" stroke="#888"/><path d="M4 1v14M1 5h13M1 9h13M9 1v14" stroke="#999"/><path d="M10 7h9v11h-9z" fill="#aaa" stroke="#888"/><path d="M10 12h9M14 7v11" stroke="#eee"/></svg></div>
              <span class="ml-[3px] flex-1">Ceiling Plan</span>
              <svg class="size-1 mr-[3px]"><use href="#caret"/></svg>
            </div>
            <div class="h-[15px] shrink-0 flex items-end pl-[2px] pr-1">
              <select aria-label="Type" class="appearance-none w-[120px] h-[14px] outline-none"><option>Ceiling Plan: Level 1</option></select>
              <svg class="size-[6px] mb-1 fill-none stroke-[#666]" viewBox="0 0 6 6"><path d="M1 2l2 2 2-2"/></svg>
              <button class="ml-auto flex items-center gap-px h-[14px]"><svg class="size-[9px] fill-none stroke-[#666]" viewBox="0 0 10 10"><path d="M1 3h4v6H1zM5 1h4v8H5zM1 6h8"/></svg>Edit Type</button>
            </div>
            <div class="h-[11px] shrink-0 mt-[3px] flex items-center border-t border-[#ddd] bg-[#edf0ec] pl-px"><span class="flex-1">Graphics</span><svg class="w-1 h-1 mr-[5px]"><path d="M1 0h2v3H1z" fill="#444"/></svg></div>
            <div class="flex h-[138px] shrink-0 overflow-hidden">
              <div class="flex-1 bg-white">
              <table class="w-full h-[138px] table-fixed leading-[10px] whitespace-nowrap [&_td]:p-0 [&_td:first-child]:pl-[5px]">
                <colgroup><col class="w-[80px]" /><col /></colgroup>
                <tbody>
                  <tr><td>View Scale</td><td class="pl-[2px]!">1/16" = 1'-0"</td></tr>
                  <tr class="text-[#aaa]"><td>Scale Value&nbsp;&nbsp;&nbsp; 1:</td><td>192</td></tr>
                  <tr><td>Display Model</td><td>Normal</td></tr>
                  <tr><td>Detail Level</td><td>Coarse</td></tr>
                  <tr><td>Parts Visibility</td><td>Show Both</td></tr>
                  <tr><td>Visibility/Graphics Ov...</td><td><button class="block w-[78px] h-[10px] leading-[8px] border border-[#ccc]">Edit...</button></td></tr>
                  <tr><td>Graphic Display Opti...</td><td><button class="block w-[78px] h-[10px] leading-[8px] border border-[#ccc]">Edit...</button></td></tr>
                  <tr><td>Orientation</td><td>Project North</td></tr>
                  <tr class="text-[#777]"><td>Wall Join Display</td><td>Clean all wall joins</td></tr>
                  <tr><td>Discipline</td><td>Architectural</td></tr>
                  <tr><td>Show Hidden Lines</td><td>By Discipline</td></tr>
                  <tr><td>Default Analysis Displ</td><td>None</td></tr>
                </tbody>
              </table>
              </div>
              <div class="w-[11px] bg-[#f0f0f0] flex flex-col items-center fill-none stroke-[#777]">
                <svg class="size-[6px]" viewBox="0 0 6 6"><path d="M1 4l2-2 2 2"/></svg>
                <i class="w-1 h-14 bg-[#d0d0d0]"></i>
                <svg class="size-[6px] mt-auto mb-2" viewBox="0 0 6 6"><path d="M1 2l2 2 2-2"/></svg>
              </div>
            </div>
            <div class="h-[15px] shrink-0 -mt-1 relative bg-[#f8faf6] flex items-start justify-between pr-3"><a href="#" class="text-[#1a7f9f] underline leading-[9px]">Properties help</a><button class="text-[#aaa] pt-[2px]" disabled>Apply</button></div>

            <!-- Project browser -->
            <div class="h-[11px] shrink-0 bg-[#cfd3ce] flex items-center justify-between pl-px pr-[2px] whitespace-nowrap"><span>Project Browser - YourName_204-Project_TermYea...</span><button aria-label="Close browser"><svg class="size-[6px] stroke-[#333]" viewBox="0 0 6 6"><path d="M.5.5l5 5M5.500.5l-5 5"/></svg></button></div>
            <label class="h-[23px] shrink-0 flex items-center pl-[10px] gap-[5px] bg-white"><svg class="size-[10px] fill-none stroke-[#666]" viewBox="0 0 10 10"><circle cx="4" cy="4" r="3"/><path d="M6 6l3.500 3.500"/></svg><input type="search" aria-label="Search" placeholder="Search" class="w-24 outline-none placeholder:text-[#aaa]" /></label>
            <div class="flex-1 min-h-0 flex bg-white text-[#666]">
              <ul class="flex-1 [&>li]:h-3 [&>li]:flex [&>li]:items-center [&>li]:gap-[2px] [&_svg]:size-[10px] [&_b]:w-2 [&_b]:text-[#444]">
                <li class="pl-[3px]"><b>−</b><svg viewBox="0 0 10 10" fill="none" stroke="#777"><path d="M1 3V1h2M9 3V1H7M1 7v2h2M9 7v2H7M3 4l1-1h3v3l-1 1H3z"/></svg>Views (all)</li>
                <li class="pl-[13px]"><b>−</b>Floor Plans</li>
                <li class="pl-[33px]"><svg><use href="#view-on"/></svg>Level 1</li>
                <li class="pl-[33px]"><svg><use href="#view-on"/></svg>Level 2</li>
                <li class="pl-[33px]"><svg><use href="#view-on"/></svg>Level 3</li>
                <li class="pl-[33px]"><svg><use href="#view-off"/></svg>Site</li>
                <li class="pl-[33px]"><svg><use href="#view-on"/></svg>T.O. Footing</li>
                <li class="pl-[13px]"><b>−</b>Ceiling Plans</li>
                <li class="pl-[33px] font-bold text-[#222]"><svg><use href="#view-off"/></svg>Level 1</li>
                <li class="pl-[33px] bg-[#f2f5f8]"><svg><use href="#view-off"/></svg>Level 2</li>
                <li class="pl-[13px]"><b>+</b>3D Views</li>
                <li class="pl-[13px]"><b>−</b>Elevations (Building Elevation)</li>
                <li class="pl-[33px]"><svg><use href="#view-on"/></svg>East</li>
                <li class="pl-[33px]"><svg><use href="#view-on"/></svg>North</li>
                <li class="pl-[33px]"><svg><use href="#view-on"/></svg>South</li>
                <li class="pl-[33px]"><svg><use href="#view-on"/></svg>West</li>
              </ul>
              <div class="w-[11px] bg-[#f0f0f0] flex flex-col items-center fill-none stroke-[#777]">
                <svg class="size-[6px] my-px" viewBox="0 0 6 6"><path d="M1 4l2-2 2 2"/></svg>
                <i class="w-1 h-[90px] mt-[5px] bg-[#d0d0d0]"></i>
                <svg class="size-[6px] mt-auto" viewBox="0 0 6 6"><path d="M1 2l2 2 2-2"/></svg>
              </div>
            </div>
          </aside>

          <main class="flex-1 min-w-0 flex flex-col">
            <!-- View tabs -->
            <div class="h-3 shrink-0 bg-[#c9cec8] flex whitespace-nowrap [&>a]:flex [&>a]:items-center [&>a]:gap-[2px] [&>a]:pl-[6px] [&>a>svg]:size-[8px]">
              <a href="#" class="w-[77px]"><svg viewBox="0 0 10 10" fill="none" stroke="#888"><path d="M1 5l4-4 4 4v4H1zM4 9V6h2v3"/></svg>(3D)</a>
              <a href="#" class="w-[118px]"><svg><use href="#sheet"/></svg>A201 - Elevations &amp; Section</a>
              <div class="w-[77px] bg-white flex items-center gap-[2px] pl-1 pr-1 font-semibold text-[#222]"><svg class="size-[10px]"><use href="#plan"/></svg><span class="flex-1">Level 1</span><button aria-label="Close view"><svg class="size-[6px] stroke-[#333]" viewBox="0 0 6 6"><path d="M.5.5l5 5M5.500.5l-5 5"/></svg></button></div>
              <a href="#" class="w-[77px]"><svg><use href="#plan"/></svg>Level 2</a>
              <a href="#" class="w-[77px]"><svg><use href="#sheet"/></svg>T.O. Footing</a>
              <a href="#" class="w-[77px]"><svg><use href="#sheet"/></svg>Level 1</a>
              <a href="#" class="w-[77px]"><svg><use href="#sheet"/></svg>Level 2</a>
              <a href="#" class="w-[77px]"><svg><use href="#sheet"/></svg>Level 3</a>
              <a href="#" class="w-[102px]"><svg viewBox="0 0 10 10" fill="none" stroke="#888"><circle cx="4" cy="5" r="3"/><path d="M6 1l3 4-3 4"/></svg>Section Looking North</a>
              <a href="#"><svg><use href="#sheet"/></svg>A110 - Reflected Ceiling Plan</a>
              <button class="ml-auto mr-[2px]" aria-label="More tabs"><svg class="size-1"><use href="#caret"/></svg></button>
            </div>

            <!-- Drawing area -->
            <div class="flex-1 min-h-0 flex bg-white">
              <div class="flex-1 min-w-0 relative overflow-hidden">
                <svg class="absolute left-0 top-0 w-[1090px] h-[440px] font-['Liberation_Sans',sans-serif]" viewBox="180 220 1090 440" fill="none" stroke="#555" stroke-width=".9">
                  <g id="grid"></g>
                  <path d="M250 482.500h940" stroke="#666"/>
                  <path d="M248 467.500h4.500v14.500h-4.500z" fill="#000" stroke="none"/>
                  <!-- Walled room -->
                  <path d="M376 391.500h118.500v119H376zM387 507.500h-8.500v-113h113.500v113H393M387 507.500v3M393 507.500v3" stroke="#444"/>
                  <circle cx="435" cy="451" r="2" stroke="#222"/>
                  <!-- Beam frames -->
                  <g stroke="#222">
                    <path d="M553.500 390.500h120v120.500h-120z"/>
                    <path d="M553.500 391v120M673.500 391v120M554 511h119" stroke-width="1.500" stroke-dasharray="19 5 4.400 5"/>
                    <path d="M731.500 390.500h121v121h-121z"/>
                    <path d="M910 390.500h121v120.500H910z"/>
                    <path d="M911 391h119M911 511h119" stroke-width="1.500" stroke-dasharray="19 5 4.400 5"/>
                  </g>
                  <g id="joists" stroke="#444"></g>
                  <g fill="#222" stroke="none">
                    <path d="M732 450h4v2h-4zM789 450h6v2.500h-6zM791 444h1v6h-1zM850 450h3v2h-3zM789 390.500h6v2h-6zM789 509.500h6v2h-6zM732 390.500h3v2h-3zM732 509.500h3v2h-3zM849 390.500h3v2h-3zM849 509.500h3v2h-3zM731 470h2v3h-2z"/>
                    <circle cx="613" cy="451" r="1.200"/><circle cx="911" cy="451" r="1.700"/><circle cx="970" cy="451" r="1.700"/><circle cx="1030" cy="451" r="1.700"/><circle cx="911" cy="510.500" r="1.700"/><circle cx="970" cy="510.500" r="1.700"/><circle cx="1030" cy="510.500" r="1.700"/><circle cx="970" cy="391" r="1.500"/><circle cx="613" cy="510.500" r="1.500"/>
                  </g>
                  <!-- Elevation tags -->
                  <path d="M722.500 248.500h20v19h-20zM722.500 267.500l10 9.500 10-9.500M722.500 605.500h20v19h-20zM722.500 605.500l10-9.500 10 9.500M229.500 441.500h19v19h-19zM248.500 441.500l9.500 9.500-9.500 9.500M1189 441.500h19.500v19H1189zM1189 441.500l-9.500 9.500 9.500 9.500"/>
                  <g fill="#222" stroke="none" font-size="5" text-anchor="middle">
                    <text x="733" y="260">A201</text><text x="732.500" y="273">4</text>
                    <text x="733" y="617">A201</text><text x="732.500" y="604">1</text>
                    <text x="239" y="453">A201</text><text x="252" y="453">3</text>
                    <text x="1199" y="453">A201</text><text x="1185" y="453">2</text>
                  </g>
                  <!-- Section head -->
                  <path d="M1176.500 482.500L1190 468.500l13.500 14z" fill="#0b3a9a" stroke="none"/>
                  <circle cx="1190.500" cy="482.500" r="9.500" fill="#fff" stroke="#2a5cc0"/><path d="M1177 482.500h27" stroke="#2a5cc0"/>
                  <g fill="#2a5cc0" stroke="none" font-size="5" text-anchor="middle"><text x="1190.500" y="480">5</text><text x="1190.500" y="488">A201</text></g>
                </svg>
                <div class="absolute right-0 top-[2px] w-[17px] h-[56px] border border-[#bbb] rounded-sm bg-[#f4f6f3] flex flex-col items-center justify-between py-[3px] fill-none stroke-[#999]">
                  <svg class="size-[3px] self-end" viewBox="0 0 4 4"><circle cx="2" cy="2" r="1.500"/></svg>
                  <svg class="size-[11px]" viewBox="0 0 11 11"><rect x="1" y="1" width="8" height="8" rx="3"/><circle cx="5" cy="5" r="2"/><path d="M7 8h4v3"/></svg>
                  <svg class="size-1 opacity-60"><use href="#caret"/></svg>
                  <svg class="size-[10px]" viewBox="0 0 10 10"><path d="M1 1h5v5H1zM3 3h4v4"/><path d="M6 6l4 4" stroke="#7b9b6b"/></svg>
                  <svg class="size-1 opacity-60"><use href="#caret"/></svg>
                  <svg class="size-[3px] self-end" viewBox="0 0 4 4"><circle cx="2" cy="2" r="1.500"/></svg>
                </div>
              </div>
              <div class="w-[10px] bg-[#f1f2f1] flex flex-col items-center justify-between py-[3px] fill-none stroke-[#666]">
                <svg class="size-[6px]" viewBox="0 0 6 6"><path d="M1 4l2-2 2 2"/></svg>
                <i class="w-1 h-[10px] bg-[#ddd]"></i>
                <svg class="size-[6px]" viewBox="0 0 6 6"><path d="M1 2l2 2 2-2"/></svg>
              </div>
            </div>

            <!-- View controls -->
            <div class="h-[11px] shrink-0 flex items-center bg-[#f8faf6]">
              <button class="w-[43px] h-[11px] bg-[#a9d9ec] text-[#335] text-[6px] shrink-0 leading-[11px]">1/16" = 1'-0"</button>
              <div class="w-[159px] shrink-0 grid grid-cols-11 justify-items-center fill-none stroke-[#666] [&_svg]:size-[10px] [&_svg]:block">
                <button aria-label="Detail level"><svg viewBox="0 0 10 10"><path d="M0 1.500h10v7H0z"/></svg></button>
                <button aria-label="Visual style"><svg viewBox="0 0 10 10"><path d="M1 3.500h6v6H1zM1 3.500l2-2.500h6v6L7 9.500M7 3.500L9 1"/></svg></button>
                <button aria-label="Sun path"><svg viewBox="0 0 10 10"><circle cx="3.500" cy="4" r="2.500" fill="#f0a81c" stroke="#f0a81c" stroke-dasharray="1 1"/><use href="#bulb" x="6" y="4" width="4" height="6"/></svg></button>
                <button aria-label="Shadows"><svg viewBox="0 0 10 10"><circle cx="4" cy="4" r="3"/><path d="M1 8.500h5"/><use href="#bulb" x="6" y="4" width="4" height="6"/></svg></button>
                <button aria-label="Crop view"><svg viewBox="0 0 10 10"><path d="M2.500 5v3M0 7h7V1M5 3h5"/><path d="M6 6l3.500 3.500M9.500 6L6 9.500" stroke="#d33" stroke-width="1.300"/></svg></button>
                <button aria-label="Show crop"><svg viewBox="0 0 10 10"><path d="M2.500 5v3M0 7h7V1M5 3h5"/><use href="#bulb" x="6" y="4" width="4" height="6"/></svg></button>
                <button aria-label="Temporary hide"><svg viewBox="0 0 10 10"><circle cx="2.500" cy="6" r="1.700"/><circle cx="7" cy="6" r="1.700"/><path d="M3 4l2-2M7 4l2-2"/></svg></button>
                <button aria-label="Reveal hidden"><svg viewBox="0 0 10 10"><use href="#bulb" x="2" y="1" width="6" height="8"/></svg></button>
                <button aria-label="Temporary view"><svg viewBox="0 0 10 10"><path d="M1 1.500h5l2 2V7H1z"/><circle cx="7" cy="7" r="2"/></svg></button>
                <button aria-label="Analytical model"><svg viewBox="0 0 10 10"><path d="M1 3h6v6H1zM1 3l2-2h6v6" fill="#d9b0a8"/><path d="M2 3l4 6M6 3L2 9" stroke="#c55"/><circle cx="8" cy="8" r="2" fill="#f0b429" stroke="none"/></svg></button>
                <button aria-label="Constraints"><svg viewBox="0 0 10 10"><path d="M1 0v9M0 2h9M8 0v4M0 7h5"/><use href="#bulb" x="6" y="4" width="4" height="6"/></svg></button>
              </div>
              <svg class="size-[6px] ml-[2px] mr-1 shrink-0 fill-none stroke-[#555]" viewBox="0 0 6 6"><path d="M4 1L2 3l2 2"/></svg>
              <div class="flex-1 h-[11px] bg-[#ececec] flex items-center justify-center"><i class="w-[10px] h-1 mr-5 bg-[#d8d8d8]"></i></div>
            </div>
          </main>
        </div>

        <!-- Status bar -->
        <footer class="h-4 shrink-0 flex items-center fill-none stroke-[#777] [&_svg]:size-[10px]">
          <span class="w-[693px]">Ready</span>
          <svg viewBox="0 0 10 10"><path d="M1 3h5l3 2v4H3z" fill="#6fbfa0"/><path d="M2 1l6 4M3 8l5-5" stroke="#3a8a6a"/></svg>
          <svg class="ml-[117px] opacity-50" viewBox="0 0 10 10"><path d="M3 3l2 2 2-2"/></svg>
          <svg class="ml-[6px] mr-[14px]" viewBox="0 0 10 10"><path d="M1 9l3-4 2 2 3-5M6 2h3v7"/></svg>
          <svg viewBox="0 0 10 10"><path d="M1 1h8v8H1zM1 3h8M4 3v6M1 6h8"/></svg>
          <svg class="ml-[3px]" viewBox="0 0 10 10"><path d="M0 1h10v8H0zM2 3h6M2 5h6M2 7h6"/></svg>
          <select aria-label="Design option" disabled class="appearance-none ml-[6px] w-[110px] font-['Liberation_Serif',serif] text-[#bbb] text-[9px] opacity-100"><option>Main Model</option></select>
          <svg class="opacity-50" viewBox="0 0 10 10"><path d="M3 4l2 2 2-2"/></svg>
          <div class="ml-auto mr-[65px] flex gap-[4px]">
            <svg viewBox="0 0 10 10"><path d="M0 3q2-2 4 0t4 0" stroke="#e3a77a"/><path d="M5 4v5l1.500-1.500L9 8z"/></svg>
            <svg viewBox="0 0 10 10"><path d="M0 5l3-3 3 2v4H0z" fill="#5aa5d5" stroke="none"/><path d="M6 1l3 3M9 1L6 4" stroke="#d33"/><path d="M5 4v5l1.500-1.500L9 8z"/></svg>
            <svg viewBox="0 0 10 10"><path d="M1 1h5M3 1v5M1 4h4"/><path d="M5 4v5l1.500-1.500L9 8z"/></svg>
            <svg viewBox="0 0 10 10"><path d="M0 2h5v7H0z" fill="#3b8fd0" stroke="none"/><path d="M6 1l3 3M9 1L6 4" stroke="#d33"/><path d="M5 4v5l1.500-1.500L9 8z"/></svg>
            <svg viewBox="0 0 10 10"><path d="M4 1v7M0 4.500h8M3 2l1-1 1 1M1 3.500L0 4.500l1 1"/><path d="M5 4v5l1.500-1.500L9 8z"/></svg>
          </div>
        </footer>

        <button class="absolute right-[2px] bottom-[3px] w-[61px] h-6 bg-[#fbfcfb] shadow-[1px_1px_1px_#888] font-['Liberation_Sans',sans-serif] font-bold text-[9px] text-[#222]">Messenger</button>
        <!-- Pointer -->
        <svg class="absolute left-[191px] bottom-[10px] w-[9px] h-[13px]" viewBox="0 0 9 13"><path d="M1 .5v10l2.300-2 1.500 3.800 1.700-.8L5 8h3.200z" fill="#fff" stroke="#222" stroke-width=".9"/></svg>
      </div>

      <!-- Taskbar -->
      <div class="h-6 shrink-0 flex items-stretch bg-[linear-gradient(90deg,#22242a,#2b2326_4%,#48251f_13%,#41301f_30%,#3d3123_85%,#1d1b19)]">
        <div class="w-[207px] shrink-0 grid grid-cols-7 [&>button]:flex [&>button]:items-center [&>button]:justify-center">
          <button aria-label="Start"><svg class="size-[10px]" viewBox="0 0 10 10"><path d="M0 1.300L4.500.7v4H0zM5.200.6L10 0v4.700H5.200zM0 5.400h4.500v4L0 8.800zM5.200 5.400H10V10l-4.800-.6z" fill="#fff"/></svg></button>
          <button aria-label="Task view"><svg class="size-[10px]" viewBox="0 0 10 10" fill="none" stroke="#ddd"><path d="M.5 3.500h6v3h-6zM0 1h7M0 9h7M9 0v10"/><path d="M8 3h2v2H8z" fill="#ddd"/></svg></button>
          <button aria-label="Edge"><svg class="size-[15px]" viewBox="0 0 16 16"><circle cx="8" cy="8" r="7.500" fill="#1b8bd0"/><path d="M.8 7A7.400 7.400 0 0 1 15.500 8q0 3-3.500 3-2.500 0-2-1.500Q10.500 6 7 6 3 6 .8 9z" fill="#37c6a0"/><path d="M5 9q0 5 5.500 5.500Q6 16.500 2.500 13 0 9 5 6.500 4.500 8 5 9z" fill="#1257a5"/><path d="M9.500 9q-1-2-2.500-1-1.500 3 2 5 3 1 5-1.500-4 1-4.500-2.500z" fill="#2a262b"/></svg></button>
          <button class="border-b border-[#8ab]" aria-label="File explorer"><svg class="w-[14px] h-3" viewBox="0 0 14 12"><path d="M0 1h5l1 1.500h8V11H0z" fill="#e9b13a"/><path d="M0 4h14v7H0z" fill="#fbdc7a"/><path d="M3 8h8v4H9V10H5v2H3z" fill="#3b9be0"/></svg></button>
          <button aria-label="Chrome"><svg class="size-[15px]"><use href="#chrome"/></svg></button>
          <button class="bg-[#75605a] border-b border-[#8ab]" aria-label="Revit"><svg class="w-[13px] h-[14px]" viewBox="0 0 13 14"><rect width="13" height="14" rx="1.500" fill="#1a5fd0"/><path d="M0 10h13v4H0z" fill="#0e469f"/><text x="6.500" y="9" font-size="9" font-weight="bold" fill="#fff" text-anchor="middle">R</text><path d="M4 12h5" stroke="#cde"/></svg></button>
          <button class="border-b border-[#8ab]" aria-label="Chrome profile"><svg class="size-4" viewBox="0 0 16 16"><use href="#chrome" width="15" height="15"/><circle cx="11.500" cy="11.500" r="4.500" fill="#f0a030"/><circle cx="11.500" cy="10" r="1.500" fill="#222"/><path d="M8.500 14q0-3 3-3t3 3z" fill="#222"/></svg></button>
        </div>
        <div class="ml-auto flex items-center pr-[10px] text-white font-[Roboto,sans-serif] text-[8px] fill-none stroke-[#ddd]">
          <svg class="size-2 mr-2" viewBox="0 0 8 8"><path d="M.5 5.500L4 2l3.500 3.500"/></svg>
          <svg class="size-[10px] mr-[6px]" viewBox="0 0 10 10"><path d="M0 3.500h2L4.500 1v8L2 6.500H0zM6 3.500q1 1.500 0 3M7.500 2q2 3 0 6M9 1q2 4 0 8" stroke-width=".8"/></svg>
          <svg class="size-[10px] mr-[6px]" viewBox="0 0 10 10"><path d="M4 7a2 2 0 1 1-1-2M4 7l5-6M5 7l4-4M3 8l3 1"/></svg>
          <div class="w-[36px] leading-[11px] mr-2 whitespace-nowrap flex flex-col items-center"><span>2:17 PM</span><span>10/17/2023</span></div>
          <svg class="size-[14px]" viewBox="0 0 14 14"><path d="M0 1h10v7H5L3 10V8H0z" fill="#fff"/><circle cx="9.500" cy="9.500" r="4" fill="#333" stroke="#999"/><path d="M8.500 8.500l1-1V12" stroke="#fff"/></svg>
        </div>
      </div>
    </div>

    <script>
      // Structural grid: numbered columns and lettered rows
      const grid = document.getElementById("grid");
      const joists = document.getElementById("joists");
      let out = "";
      function bubble(x, y, label) {
        return `<circle cx="${x}" cy="${y}" r="9.700" stroke="#444"/><text x="${x}" y="${y + 3.5}" font-size="10" text-anchor="middle" fill="#222" stroke="none">${label}</text>`;
      }
      for (let i = 0; i < 15; i++) {
        const x = 316 + i * 59.5;
        out += `<path d="M${x} 305.500V587" stroke-dasharray="19 5 4.400 5" stroke-dashoffset="2"/>` + bubble(x, 296, i + 1);
      }
      ["A", "B", "C", "D", "E"].forEach((name, i) => {
        const y = 331.5 + i * 59.6;
        out += `<path d="M287 ${y}H1170" stroke-dasharray="19 5 4.300 5"/>` + bubble(277, y, name);
      });
      grid.innerHTML = out;

      out = "";
      for (let i = 0; i < 12; i++) {
        out += `<path d="M${738.5 + i * 9.5} 391v120"/>`;
      }
      joists.innerHTML = out;
    </script>
  </body>
</html>
